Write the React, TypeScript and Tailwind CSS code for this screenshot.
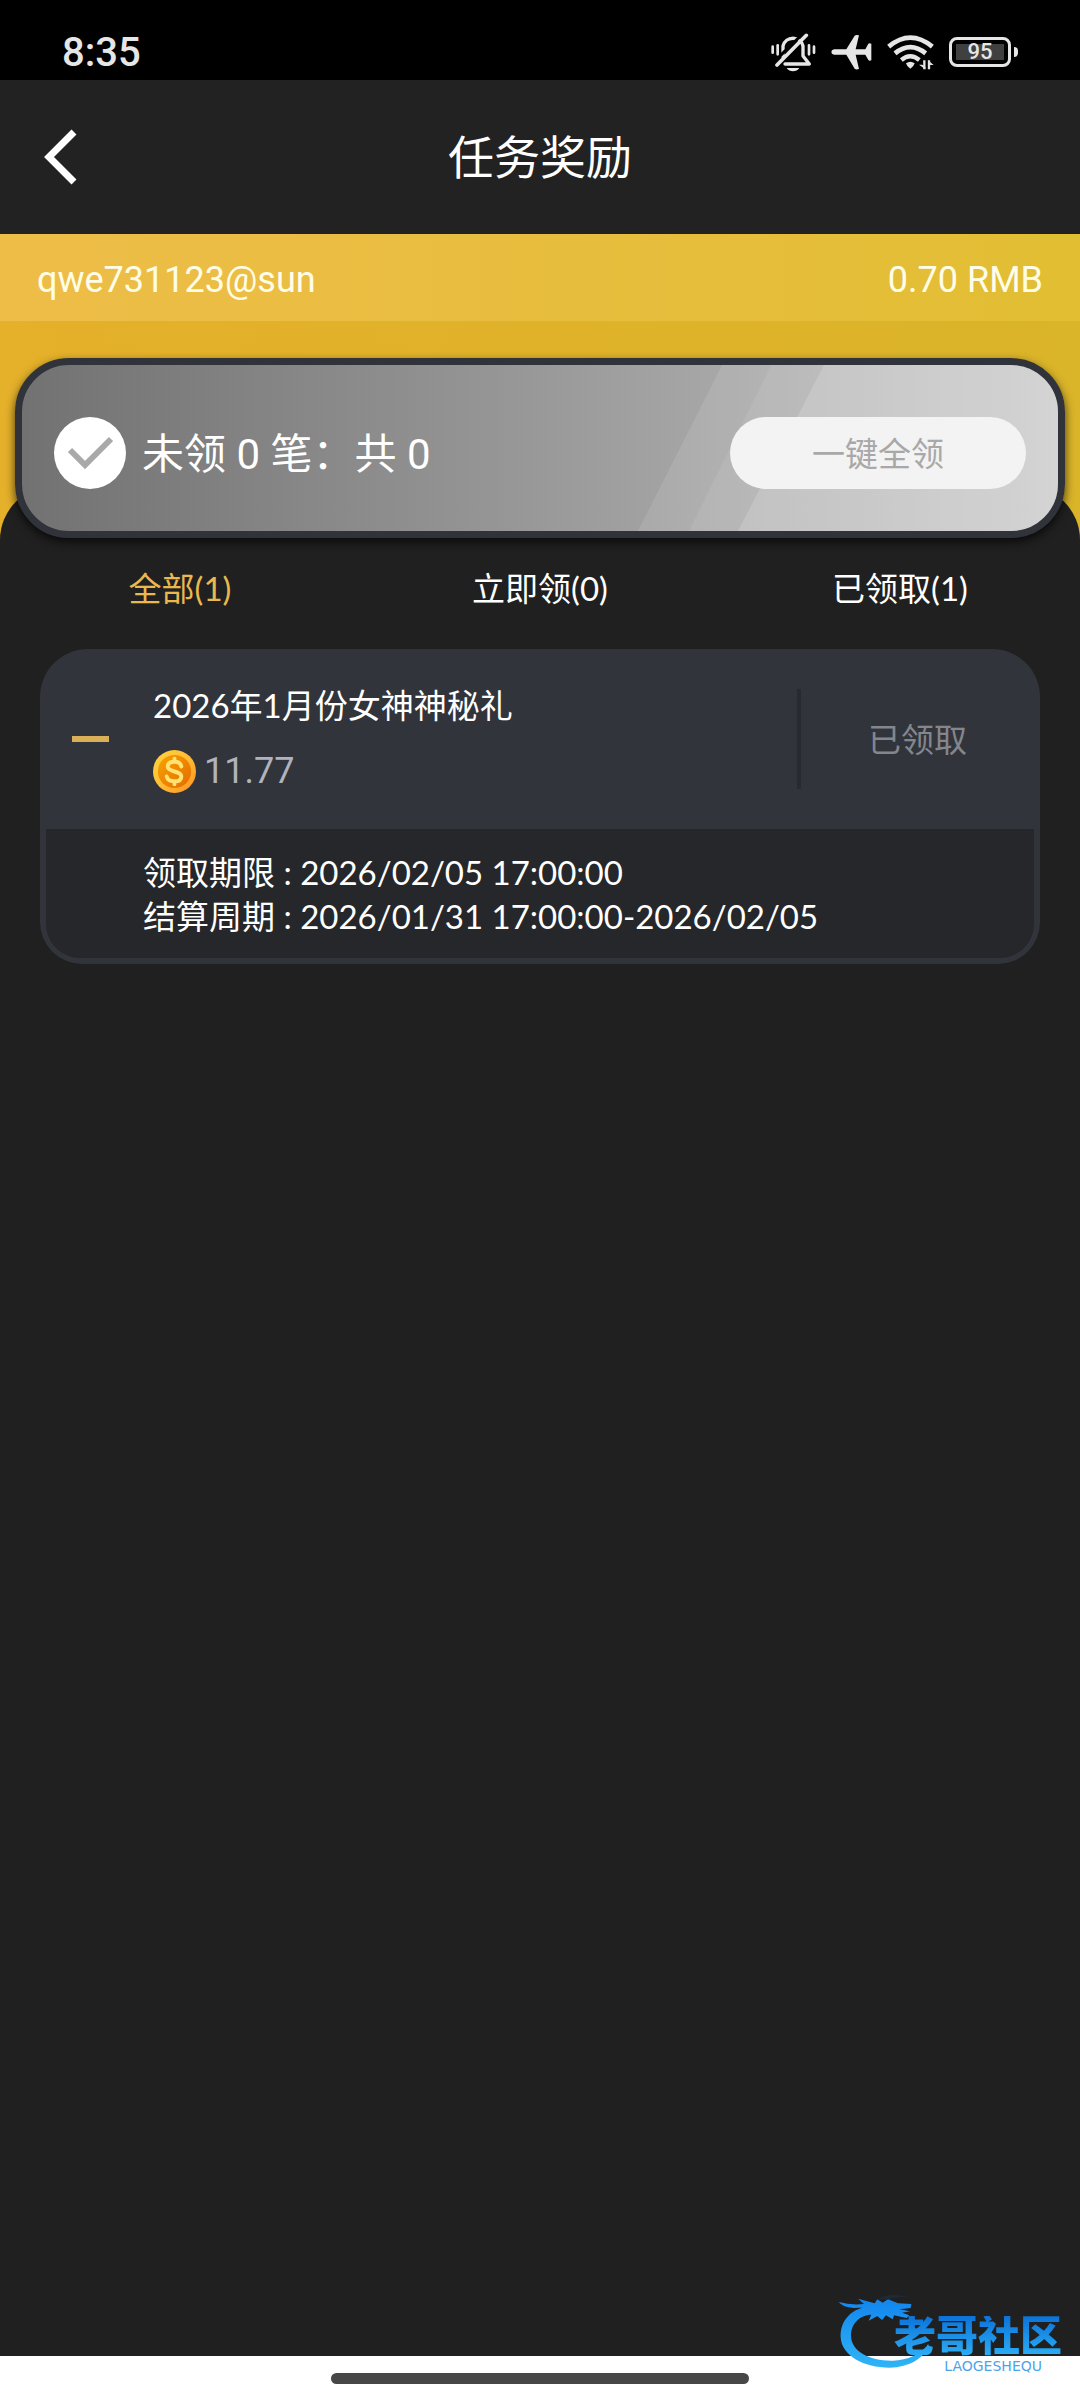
import { useState } from 'react'

// ---------------------------------------------------------------------------
// Types
// ---------------------------------------------------------------------------

type TabKey = 'all' | 'pending' | 'claimed'

interface Reward {
  id: number
  title: string
  amount: string
  claimed: boolean
  deadline: string
  period: string
}

// ---------------------------------------------------------------------------
// Constants
// ---------------------------------------------------------------------------

const REWARDS: Reward[] = [
  {
    id: 1,
    title: '2026年1月份女神神秘礼',
    amount: '11.77',
    claimed: true,
    deadline: '2026/02/05 17:00:00',
    period: '2026/01/31 17:00:00-2026/02/05',
  },
]

const TABS: { key: TabKey; label: string; match: (r: Reward) => boolean }[] = [
  { key: 'all', label: '全部', match: () => true },
  { key: 'pending', label: '立即领', match: (r) => !r.claimed },
  { key: 'claimed', label: '已领取', match: (r) => r.claimed },
]

// ---------------------------------------------------------------------------
// Icons
// ---------------------------------------------------------------------------

function BellOffIcon() {
  return (
    <svg width="45" height="39" viewBox="92 99 135 117" fill="none" stroke="currentColor" strokeLinecap="round">
      <path d="M128 170V138a31 31 0 0 1 60 0V168L207 192H134" strokeWidth="10" strokeLinejoin="round" />
      <path d="M102 184L192 97" stroke="#000" strokeWidth="9" strokeLinecap="butt" />
      <path d="M110 195L198 106" strokeWidth="11" />
      <path d="M139 204H177Q170 214 158 214T139 204Z" fill="currentColor" stroke="none" />
      <path d="M97 140V158M112 136V163M206 136V163M221 140V158" strokeWidth="8" />
    </svg>
  )
}

function PlaneIcon() {
  return (
    <svg width="41" height="36" viewBox="275 101 123 108" fill="currentColor">
      <path d="M284 147H321L346 106Q350 102 359 105L349 147H378L387 130Q390 127 396 130V180Q390 183 387 179L378 163H349L359 206Q350 209 346 205L321 163H284Q276 161 276 155T284 147Z" />
    </svg>
  )
}

function WifiIcon() {
  return (
    <svg width="47" height="36" viewBox="442 104 141 108" fill="none" stroke="currentColor">
      <path d="M447 142Q512 88 578 142" strokeWidth="14" />
      <path d="M466 162Q512 125 558 162" strokeWidth="14" />
      <path d="M485 182Q512 160 539 182" strokeWidth="13" />
      <path d="M499 192Q512 182 525 192Q522 203 512 208Q502 203 499 192Z" fill="currentColor" stroke="none" />
      <path d="M554 183V210M568 210V183" strokeWidth="7" />
      <path d="M557 210L538 196H548L557 203ZM565 183L582 197H572L565 190Z" fill="currentColor" stroke="none" />
    </svg>
  )
}

function CoinIcon() {
  return (
    <svg width="43" height="43" viewBox="0 0 44 44">
      <defs>
        <linearGradient id="coin-rim" x1="0" y1="0" x2="1" y2="1">
          <stop offset="0" stopColor="#ffd33f" />
          <stop offset="0.5" stopColor="#ffbd35" />
          <stop offset="1" stopColor="#ff9020" />
        </linearGradient>
        <linearGradient id="coin-face" x1="0" y1="0" x2="1" y2="1">
          <stop offset="0" stopColor="#f6a400" />
          <stop offset="1" stopColor="#e46a00" />
        </linearGradient>
      </defs>
      <circle cx="22" cy="22" r="22" fill="url(#coin-rim)" />
      <circle cx="22" cy="22" r="17" fill="url(#coin-face)" />
      <path
        d="M29 17Q28 12 22 12Q15 12 15 17Q15 20 22 22Q29 24 29 27Q29 32 22 32Q15 32 14 27M22 9V12M22 32V35"
        fill="none"
        stroke="#ffe272"
        strokeWidth="4"
        strokeLinecap="round"
      />
    </svg>
  )
}

function DragonMark() {
  return (
    <svg width="92" height="80" viewBox="112 76 276 240" className="absolute left-0 top-0">
      <defs>
        <linearGradient id="dragon" x1="0" y1="0" x2="0" y2="1">
          <stop offset="0" stopColor="#1285ee" />
          <stop offset="1" stopColor="#2fb5f5" />
        </linearGradient>
      </defs>
      <path
        d="M220 118C150 120 118 164 120 212C123 268 190 303 266 303C326 302 374 274 384 232C360 262 322 281 276 282C206 283 152 254 151 208C150 172 178 144 212 144L204 162L230 148L244 160L256 146L276 158L280 146L318 154L326 146L304 138L328 134L296 128L330 124L332 112L292 110L262 98L246 108L230 98L222 110L172 96L190 112Q150 116 114 106Q126 122 160 124Q190 124 220 118Z"
        fill="url(#dragon)"
      />
      <path d="M230 98Q262 76 328 92Q290 88 262 98Z" fill="#1c2a38" />
    </svg>
  )
}

// ---------------------------------------------------------------------------
// Sections
// ---------------------------------------------------------------------------

function StatusBar() {
  return (
    <div className="flex h-20 items-center justify-between bg-black px-[62px] pt-6 text-[#e6e6e6]">
      <span className="pt-0.5 text-[40px] font-medium leading-none">8:35</span>
      <div className="flex items-center gap-[15px]">
        <BellOffIcon />
        <PlaneIcon />
        <WifiIcon />
        <div className="flex items-center gap-[3px]">
          <div className="flex h-[30px] w-[62px] rounded-lg border-3 border-current p-1">
            <div className="flex flex-1 items-center justify-center bg-[#404040] text-[22px] font-medium leading-none">
              95
            </div>
          </div>
          <div className="h-2.5 w-1 rounded-r bg-current" />
        </div>
      </div>
    </div>
  )
}

function Header() {
  return (
    <header className="grid h-[154px] grid-cols-[1fr_auto_1fr] items-center bg-[#222222] px-10">
      <button type="button" aria-label="返回" className="w-fit">
        <svg width="40" height="56" viewBox="0 0 40 56" fill="none" stroke="white" strokeWidth="7">
          <path d="M34 3L9 28L34 53" />
        </svg>
      </button>
      <h1 className="pt-0.5 text-[46px] leading-none text-white">任务奖励</h1>
    </header>
  )
}

function ClaimAllCard({ count, total }: { count: number; total: number }) {
  return (
    <section className="relative z-10 mx-[15px] mt-[37px] flex h-[180px] items-center overflow-hidden rounded-[54px] border-7 border-[#30333a] bg-linear-to-r from-[#727272] to-[#c2c2c2] px-8 pt-2.5 shadow-[0_4px_10px_rgba(0,0,0,0.7)]">
      <svg className="absolute right-0 top-0" width="420" height="166" viewBox="0 0 420 166" fill="white">
        <path d="M0 166L84 0H420V166Z" fillOpacity="0.1" />
        <path d="M51 166L133 0H420V166Z" fillOpacity="0.08" />
        <path d="M100 166L186 0H420V166Z" fillOpacity="0.16" />
      </svg>
      <svg className="relative shrink-0" width="72" height="72" viewBox="0 0 72 72" fill="none">
        <circle cx="36" cy="36" r="36" fill="white" />
        <path d="M16 33L31 48L57 22" stroke="#a9a9a9" strokeWidth="6" />
      </svg>
      <p className="relative ml-4 flex-1 pt-1 text-[42px] leading-none text-white">
        未领 {count} 笔：共 {total}
      </p>
      <button
        type="button"
        disabled={count === 0}
        className="relative h-[72px] w-[296px] rounded-full bg-[#f3f3f3] pt-0.5 text-[33px] leading-none text-[#a8a8a8]"
      >
        一键全领
      </button>
    </section>
  )
}

function RewardCard({ reward }: { reward: Reward }) {
  const [open, setOpen] = useState(true)

  return (
    <article className="rounded-t-[48px] rounded-b-[42px] bg-[#32343b] px-1.5 pb-1.5">
      <div className="flex h-[180px] items-center">
        <button
          type="button"
          aria-label="展开详情"
          aria-expanded={open}
          onClick={() => setOpen(!open)}
          className="flex h-20 w-[107px] items-center pl-[26px]"
        >
          <span className="h-1.5 w-[37px] bg-[#dbae58]" />
        </button>
        <div className="flex flex-1 flex-col gap-5 pb-1">
          <h2 className="text-[33px] leading-[48px] text-white">{reward.title}</h2>
          <p className="flex items-center gap-2 font-[Roboto,sans-serif] text-[36px] leading-[44px] text-[#b0b3bd]">
            <CoinIcon />
            {reward.amount}
          </p>
        </div>
        <div className="flex h-[100px] w-[237px] items-center justify-center border-l-4 border-[#272a30] text-[33px] leading-none text-[#84868d]">
          {reward.claimed ? '已领取' : '立即领'}
        </div>
      </div>
      {open && (
        <div className="rounded-b-[34px] bg-[#25272b] pb-5 pl-[97px] pt-[21px] text-[33px] leading-[44px] text-white">
          <p>领取期限 : {reward.deadline}</p>
          <p>结算周期 : {reward.period}</p>
        </div>
      )}
    </article>
  )
}

function Watermark() {
  return (
    <div className="absolute bottom-7 right-[18px] h-20 w-[224px]">
      <DragonMark />
      <div className="relative flex flex-col items-end pt-6">
        <span className="bg-linear-to-b from-[#0d72d8] to-[#2eb0f7] bg-clip-text text-[42px] font-black leading-[42px] text-transparent">
          老哥社区
        </span>
        <span className="pr-5 pt-0.5 font-['DejaVu_Sans'] text-[14px] leading-3 text-[#4da3ea]">LAOGESHEQU</span>
      </div>
    </div>
  )
}

// ---------------------------------------------------------------------------
// Page
// ---------------------------------------------------------------------------

export default function App() {
  const [tab, setTab] = useState<TabKey>('all')
  const active = TABS.find((t) => t.key === tab) ?? TABS[0]
  const pending = REWARDS.filter((r) => !r.claimed)

  return (
    <div className="relative flex min-h-screen flex-col bg-[#202020] font-[Roboto,'Noto_Sans_CJK_SC',sans-serif]">
      <StatusBar />
      <Header />

      <main className="flex flex-1 flex-col bg-linear-to-r from-[#e5b02a] to-[#dab429]">
        <div className="flex h-[87px] items-center justify-between bg-linear-to-r from-[#eebd48] to-[#e2be33] px-[37px] pt-1 text-[36px] leading-none text-[#fffde8]">
          <span>qwe731123@sun</span>
          <span>0.70 RMB</span>
        </div>

        <ClaimAllCard count={pending.length} total={0} />

        <div className="-mt-[52px] flex-1 rounded-t-[54px] bg-[#202020] pt-[72px] font-[Lato,'Noto_Sans_CJK_SC',sans-serif]">
          <nav className="grid grid-cols-3">
            {TABS.map((t) => (
              <button
                key={t.key}
                type="button"
                onClick={() => setTab(t.key)}
                className={`h-[60px] text-[33px] leading-none ${t.key === tab ? 'text-[#e9b850]' : 'text-white'}`}
              >
                {t.label}({REWARDS.filter(t.match).length})
              </button>
            ))}
          </nav>
          <div className="mt-[31px] flex flex-col gap-6 px-10">
            {REWARDS.filter(active.match).map((r) => (
              <RewardCard key={r.id} reward={r} />
            ))}
          </div>
        </div>
      </main>

      <div className="flex h-11 items-center justify-center bg-white">
        <div className="h-[11px] w-[418px] rounded-full bg-[#474747]" />
      </div>
      <Watermark />
    </div>
  )
}
